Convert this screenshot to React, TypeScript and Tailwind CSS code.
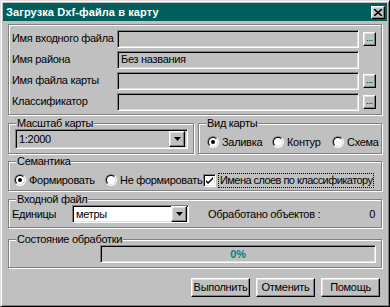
import React from 'react';

const raised =
  'border border-t-white border-l-white border-r-black border-b-black shadow-[inset_-1px_-1px_0_#808080,inset_1px_1px_0_#dfdfdf]';
const sunken =
  'border border-t-[#808080] border-l-[#808080] border-r-white border-b-white shadow-[inset_1px_1px_0_#000,inset_-1px_-1px_0_#dfdfdf]';
const group = 'border border-[#808080] shadow-[inset_1px_1px_0_#fff,1px_1px_0_#fff] min-w-0';

const Legend = ({ children }: { children: React.ReactNode }) => (
  <legend className="ml-[7px] px-[1px] bg-[#c0c0c0] leading-[12px] relative">{children}</legend>
);

const Radio = ({ checked, label }: { checked?: boolean; label: string }) => (
  <div className="flex items-center gap-[3px]">
    <span className="w-[12px] h-[12px] rounded-full border border-t-[#808080] border-l-[#808080] border-r-white border-b-white flex items-center justify-center">
      <span className="w-[10px] h-[10px] rounded-full border border-t-black border-l-black border-r-[#dfdfdf] border-b-[#dfdfdf] bg-white flex items-center justify-center">
        {checked && <span className="w-[4px] h-[4px] rounded-full bg-black" />}
      </span>
    </span>
    <span>{label}</span>
  </div>
);

const Arrow = () => (
  <span className={`w-[16px] h-[16px] flex items-center justify-center bg-[#c0c0c0] ${raised}`}>
    <svg width="7" height="4" viewBox="0 0 7 4">
      <path d="M0 0h7L3.5 4z" fill="#000" />
    </svg>
  </span>
);

const FileRow = ({ label, value, browse }: { label: string; value?: string; browse?: boolean }) => (
  <div className="flex items-center h-[21px]">
    <span className="w-[105px]">{label}</span>
    <div className={`w-[242px] h-[18px] ${sunken} flex items-center px-[3px]`}>{value}</div>
    {browse && (
      <button className={`ml-[4px] w-[13px] h-[14px] ${raised} flex items-end justify-center text-[9px] leading-[9px] pb-[2px]`}>
        ...
      </button>
    )}
  </div>
);

export default function App() {
  return (
    <div
      className="w-[390px] h-[307px] bg-[#c0c0c0] border border-t-[#dfdfdf] border-l-[#dfdfdf] border-r-black border-b-black shadow-[inset_1px_1px_0_#fff,inset_-1px_-1px_0_#808080] p-[2px] text-[11px] tracking-[-0.3px] whitespace-nowrap text-black"
      style={{ fontFamily: '"Liberation Sans", Arial, sans-serif' }}
    >
      {/* Title bar */}
      <div className="h-[18px] bg-[#005f5c] flex items-center justify-between pl-[3px] pr-[2px]">
        <span className="text-white font-bold text-[11px] tracking-[0.1px]">Загрузка Dxf-файла в карту</span>
        <button className={`w-[14px] h-[13px] bg-[#c0c0c0] ${raised} flex items-center justify-center`}>
          <svg width="8" height="7" viewBox="0 0 8 7">
            <path d="M0 0l8 7M8 0L0 7" stroke="#000" strokeWidth="1.6" />
          </svg>
        </button>
      </div>

      <div className="px-[5px] pt-[3px]">
        {/* Files group */}
        <div className={`${group} h-[91px] pt-[3px] pl-[3px]`}>
          <FileRow label="Имя входного файла" browse />
          <FileRow label="Имя района" value="Без названия" />
          <FileRow label="Имя файла карты" browse />
          <FileRow label="Классификатор" browse />
        </div>

        {/* Scale + map type */}
        <div className="flex gap-[4px] mt-[2px]">
          <fieldset className={`${group} w-[186px] h-[37px]`}>
            <Legend>Масштаб карты</Legend>
            <div className="pl-[6px]">
              <div className={`w-[173px] h-[20px] ${sunken} flex items-center justify-between pl-[3px] pr-[2px]`}>
                <span>1:2000</span>
                <Arrow />
              </div>
            </div>
          </fieldset>
          <fieldset className={`${group} flex-1 h-[37px]`}>
            <Legend>Вид карты</Legend>
            <div className="flex items-center mt-[5px] pl-[8px]">
              <div className="w-[65px]"><Radio checked label="Заливка" /></div>
              <div className="w-[60px]"><Radio label="Контур" /></div>
              <Radio label="Схема" />
            </div>
          </fieldset>
        </div>

        {/* Semantics */}
        <fieldset className={`${group} h-[36px] mt-[1px]`}>
          <Legend>Семантика</Legend>
          <div className="flex items-center mt-[5px] pl-[5px]">
            <div className="w-[91px]"><Radio checked label="Формировать" /></div>
            <div className="w-[98px]"><Radio label="Не формировать" /></div>
            <div className="flex items-center gap-[2px]">
              <span className={`w-[13px] h-[13px] bg-white ${sunken} flex items-center justify-center`}>
                <svg width="7" height="7" viewBox="0 0 7 7">
                  <path d="M0 3l2 2 5-5v2l-5 5-2-2z" fill="#000" />
                </svg>
              </span>
              <span className="border border-dotted border-black px-[1px] leading-[13px] tracking-[-0.55px]">Имена слоев по классификатору</span>
            </div>
          </div>
        </fieldset>

        {/* Input file */}
        <fieldset className={`${group} h-[35px] mt-[2px]`}>
          <Legend>Входной файл</Legend>
          <div className="flex items-center pl-[3px] pr-[6px]">
            <span className="w-[60px]">Единицы</span>
            <div className={`w-[117px] h-[18px] bg-white ${sunken} flex items-center justify-between pl-[3px] pr-[1px]`}>
              <span>метры</span>
              <Arrow />
            </div>
            <span className="ml-[19px]">Обработано объектов :</span>
            <span className="ml-auto">0</span>
          </div>
        </fieldset>

        {/* Progress */}
        <fieldset className={`${group} h-[35px] mt-[5px]`}>
          <Legend>Состояние обработки</Legend>
          <div className="pl-[91px] pr-[5px]">
            <div className={`h-[18px] ${sunken} flex items-center justify-center text-[#008080] font-bold`}>0%</div>
          </div>
        </fieldset>

        {/* Buttons */}
        <div className="flex justify-end gap-[6px] mt-[10px] pr-[2px]">
          {['Выполнить', 'Отменить', 'Помощь'].map((b) => (
            <button key={b} className={`w-[59px] h-[19px] ${raised} flex items-center justify-center`}>
              {b}
            </button>
          ))}
        </div>
      </div>
    </div>
  );
}
